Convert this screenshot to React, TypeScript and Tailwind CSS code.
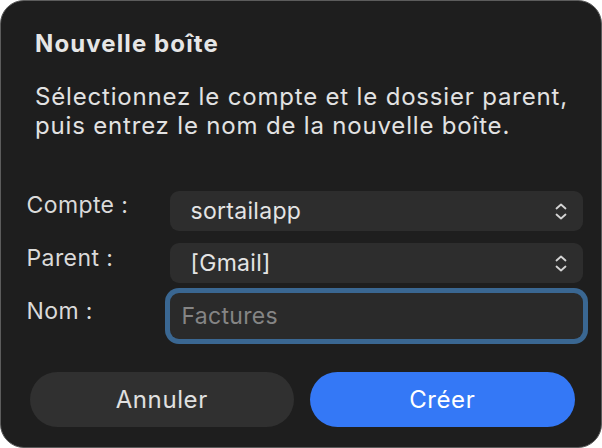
import React from "react";

const font = { fontFamily: "Inter, 'Noto Sans', sans-serif" };

function UpDown() {
  return (
    <svg width="12" height="19" viewBox="0 0 12 19" fill="none" stroke="#d4d4d4" strokeWidth="1.8" strokeLinecap="round" strokeLinejoin="round">
      <path d="M1.5 6.5 L6 2.5 L10.5 6.5" />
      <path d="M1.5 12.5 L6 16.5 L10.5 12.5" />
    </svg>
  );
}

function Popup({ value }: { value: string }) {
  return (
    <div className="flex h-10 items-center justify-between rounded-[9px] bg-[#2d2d2d] pl-[21px] pr-[16px] text-[23px] tracking-[0.3px] text-[#e4e4e4]">
      <span>{value}</span>
      <UpDown />
    </div>
  );
}

export default function App() {
  return (
    <div className="h-[448px] w-[602px] bg-white" style={font}>
      <div className="flex h-full flex-col rounded-[24px] border-[1.5px] border-[#5c5c5c] bg-[#1e1e1e] text-[#e2e2e2]">
        <h1 className="pl-[34px] pt-[28px] text-[24px] font-bold leading-[30px] tracking-[1.1px] text-[#e6e6e6]">Nouvelle boîte</h1>
        <p className="mt-[23px] pl-[34px] text-[24px] leading-[29px] tracking-[0.82px] text-[#e2e2e2]">
          Sélectionnez le compte et le dossier parent,
          <br />
          puis entrez le nom de la nouvelle boîte.
        </p>

        {/* form rows */}
        <div className="mt-[51px] grid grid-cols-[143px_1fr] pl-[25.5px] pr-[18.5px]">
          <div className="h-10 text-[23px] leading-[28px] tracking-[0.4px] text-[#dadada]">Compte :</div>
          <Popup value="sortailapp" />
          <div className="mt-[12px] h-10 pt-[1px] text-[23px] leading-[28px] tracking-[0.4px] text-[#dadada]">Parent :</div>
          <div className="mt-[12px]">
            <Popup value="[Gmail]" />
          </div>
          <div className="mt-[10px] h-[46px] pt-[4px] text-[23px] leading-[28px] tracking-[0.4px] text-[#dadada]">Nom :</div>
          <div className="mt-[10px] h-[46px] rounded-[9px] bg-[#2a2a2a] shadow-[0_0_0_5px_#3a6792]">
            <input
              className="h-full w-full bg-transparent px-[12px] text-[23px] tracking-[0.3px] text-[#e4e4e4] outline-none placeholder:text-[#858585]"
              placeholder="Factures"
              style={font}
            />
          </div>
        </div>

        <div className="mt-[33px] flex gap-4 pl-[28.5px] pr-[26.5px]">
          <button className="h-[55px] flex-1 rounded-full bg-[#303030] text-[24px] font-normal tracking-[0.6px] text-[#e0e0e0]">Annuler</button>
          <button className="h-[55px] flex-1 rounded-full bg-[#3478f6] text-[24px] font-normal tracking-[0.6px] text-white">Créer</button>
        </div>
      </div>
    </div>
  );
}
